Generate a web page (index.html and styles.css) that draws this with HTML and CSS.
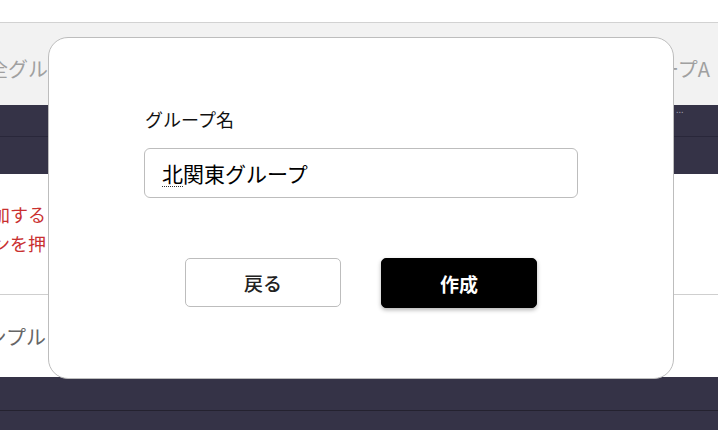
FILE: index.html
```html
<!DOCTYPE html>
<html lang="ja">
<head>
<meta charset="utf-8">
<title>グループ作成</title>
<link rel="stylesheet" href="styles.css">
</head>
<body>
<div class="page">
  <div class="topbar"></div>
  <div class="head-row">
    <div class="head-left gray-text">全グループ</div>
    <div class="spacer"></div>
    <div class="right-cell gray-text">グループA</div>
  </div>
  <div class="dark-row first">
    <div class="spacer"></div>
    <div class="dots">...</div>
  </div>
  <div class="dark-row second"></div>
  <div class="note-area">
    <div class="clip-col red-text">
      <div>グループを追加する</div>
      <div>作成ボタンを押</div>
    </div>
  </div>
  <div class="sample-row">
    <div class="clip-left dim-text"><span>サンプル</span></div>
  </div>
  <div class="dark-foot">
    <div class="foot-a"></div>
    <div class="foot-b"></div>
  </div>
</div>

<div class="modal">
  <div class="modal-body">
    <div class="field-label">グループ名</div>
    <div class="field-input"><span class="ime">北</span>関東グループ</div>
  </div>
  <div class="actions">
    <button class="btn btn-back">戻る</button>
    <button class="btn btn-create">作成</button>
  </div>
</div>
</body>
</html>
```

FILE: styles.css
```css
* { box-sizing: border-box; }

html, body {
  margin: 0;
  padding: 0;
  background: #ffffff;
  font-family: "Noto Sans CJK JP", "Noto Sans", sans-serif;
  font-weight: 400;
  overflow: hidden;
}

.page {
  width: 718px;
  height: 430px;
  display: flex;
  flex-direction: column;
}

.topbar {
  height: 23px;
  border-bottom: 1px solid #d2d2d2;
  background: #ffffff;
  flex: none;
}

.head-row {
  height: 82px;
  background: #f2f2f2;
  display: flex;
  align-items: center;
  padding-top: 8px;
  flex: none;
}

.head-left {
  margin-left: -12px;
  white-space: nowrap;
}

.gray-text {
  color: #a0a0a0;
  font-size: 20px;
}

.dim-text {
  color: #666666;
  font-size: 20px;
}

.red-text {
  color: #c93030;
  font-size: 18px;
  line-height: 29px;
}

.clip-left {
  width: 46px;
  overflow: hidden;
  display: flex;
  justify-content: flex-end;
  white-space: nowrap;
  flex: none;
}

.spacer { flex: 1; }

.right-cell {
  white-space: nowrap;
  padding-right: 8px;
}

.dark-row {
  background: #353347;
  display: flex;
  flex: none;
}

.dark-row.first {
  height: 31px;
}

.dark-row.second {
  height: 38px;
  border-top: 1px solid #29273a;
}

.dots {
  color: #9a98a8;
  font-size: 9px;
  line-height: 9px;
  width: 42px;
}

.note-area {
  height: 121px;
  border-bottom: 1px solid #cfcfcf;
  padding-top: 26px;
  flex: none;
}

.clip-col {
  width: 46px;
  overflow: hidden;
  display: flex;
  flex-direction: column;
  align-items: flex-end;
  white-space: nowrap;
}

.sample-row {
  height: 82px;
  display: flex;
  align-items: center;
  flex: none;
}

.dark-foot {
  flex: 1;
  display: flex;
  flex-direction: column;
  background: #353347;
}

.foot-a {
  height: 34px;
  border-bottom: 1px solid #24222f;
}

.foot-b { flex: 1; }

.modal {
  position: absolute;
  left: 48px;
  top: 37px;
  width: 626px;
  height: 342px;
  background: #ffffff;
  border: 1px solid #bdbdbd;
  border-radius: 20px;
  display: flex;
  flex-direction: column;
  align-items: center;
  padding-top: 68px;
}

.modal-body {
  width: 434px;
}

.field-label {
  font-size: 18px;
  line-height: 26px;
  color: #111111;
  padding-left: 1px;
}

.field-input {
  margin-top: 16px;
  height: 50px;
  border: 1px solid #bdbdbd;
  border-radius: 6px;
  padding-left: 17px;
  font-size: 21px;
  line-height: 48px;
  color: #000000;
}

.ime {
  border-bottom: 1px dotted #333333;
  display: inline-block;
  line-height: 26px;
}

.actions {
  margin-top: 60px;
  display: flex;
  gap: 40px;
}

.btn {
  width: 156px;
  height: 49px;
  border-radius: 5px;
  font-family: "Noto Sans CJK JP", "Noto Sans", sans-serif;
  font-size: 19px;
  font-weight: 500;
  cursor: pointer;
}

.btn-back {
  background: #ffffff;
  border: 1px solid #bdbdbd;
  color: #222222;
}

.btn-create {
  background: #000000;
  border: 1px solid #000000;
  color: #ffffff;
  font-weight: 700;
  height: 50px;
  box-shadow: 0 2px 4px rgba(0, 0, 0, 0.3);
}
```
